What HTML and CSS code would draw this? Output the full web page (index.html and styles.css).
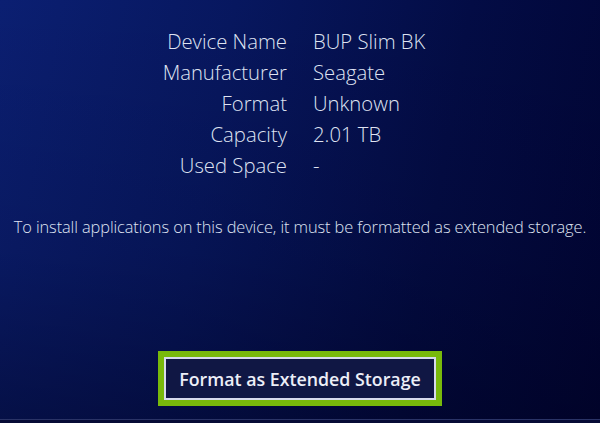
FILE: index.html
```html
<!DOCTYPE html>
<html lang="en">
<head>
<meta charset="utf-8">
<title>Storage Device</title>
<link rel="stylesheet" href="styles.css">
</head>
<body>
<div class="screen">
  <dl class="info">
    <dt>Device Name</dt><dd>BUP Slim BK</dd>
    <dt>Manufacturer</dt><dd>Seagate</dd>
    <dt>Format</dt><dd>Unknown</dd>
    <dt>Capacity</dt><dd>2.01 TB</dd>
    <dt>Used Space</dt><dd>-</dd>
  </dl>
  <p class="note">To install applications on this device, it must be formatted as extended storage.</p>
  <div class="actions">
    <button class="btn">Format as Extended Storage</button>
  </div>
  <div class="edge"></div>
</div>
</body>
</html>
```
FILE: styles.css
```css
html, body {
  margin: 0;
  padding: 0;
  width: 600px;
  height: 423px;
  overflow: hidden;
}
body {
  font-family: "Open Sans", "Noto Sans", sans-serif;
  color: #dfe3f2;
}
.screen {
  width: 600px;
  height: 423px;
  display: flex;
  flex-direction: column;
  background:
    linear-gradient(180deg, rgba(0,0,0,0) 0%, rgba(0,0,20,0.15) 60%, rgba(0,0,25,0.45) 100%),
    linear-gradient(100deg, #0b1f72 0%, #07175f 35%, #030c45 70%, #010536 100%);
}
.info {
  margin: 26px 0 0 0;
  display: grid;
  grid-template-columns: 287px 1fr;
  column-gap: 26px;
  row-gap: 0;
  font-size: 20.3px;
  font-weight: 300;
  line-height: 31px;
}
.info dt {
  text-align: right;
  margin: 0;
}
.info dd {
  margin: 0;
}
.note {
  margin: 35px 0 0 0;
  text-align: center;
  font-size: 16.4px;
  font-weight: 300;
  line-height: 22px;
  letter-spacing: -0.1px;
  white-space: nowrap;
}
.actions {
  margin-top: 113px;
  display: flex;
  justify-content: center;
}
.btn {
  width: 284px;
  height: 55px;
  box-sizing: border-box;
  border: 6px solid #78b90b;
  background: #101744;
  box-shadow: inset 0 0 0 2px #d6daec;
  color: #eceef7;
  font-family: "Open Sans", "Noto Sans", sans-serif;
  font-size: 17.8px;
  font-weight: 600;
  padding: 0;
  margin-left: 0;
}
.edge {
  margin-top: auto;
  height: 3px;
  border-top: 1px solid #2a3366;
  background: #060a35;
}
```
